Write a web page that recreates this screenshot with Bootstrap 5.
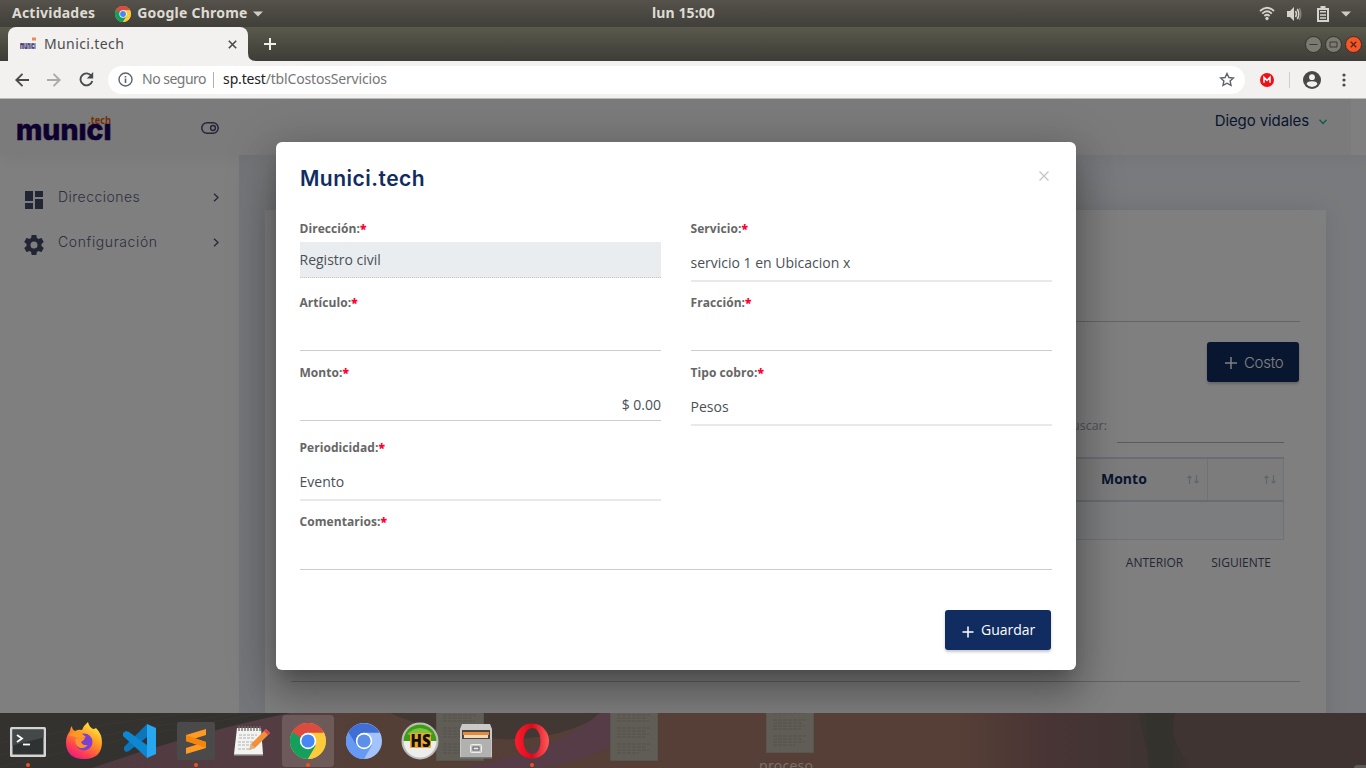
<!DOCTYPE html>
<html lang="es">
<head>
<meta charset="utf-8">
<title>Munici.tech</title>
<link href="https://cdn.jsdelivr.net/npm/bootstrap@5.3.0/dist/css/bootstrap.min.css" rel="stylesheet">
<style>
body{width:1366px;height:768px;overflow:hidden;font-family:"Open Sans","Noto Sans",sans-serif;font-size:14px;color:#495057;line-height:1.3}
svg{display:block;flex:none}
.lbl{white-space:nowrap}
.topbar{height:27px;background:linear-gradient(#55524b,#403f39);font:700 14px "Noto Sans",sans-serif;color:#dfdbd2}
.topbar .lbl,.tab-on .lbl,.tools .lbl{padding-bottom:2px}
.strip{height:34px;background:linear-gradient(#5a594c,#3d3c37)}
.tab-on{width:240px;margin-left:8px;background:#f2f1f0;border-radius:8px 8px 0 0;color:#4c4c4c;font:14px "Noto Sans",sans-serif;padding:0 11px 0 12px}
.tools{height:38px;background:#f2f1f0;border-bottom:1px solid #b9bbba;color:#767676;font:14px "Noto Sans",sans-serif}
.omni{width:1137px;height:28px;margin-left:14px;border-radius:14px;background:#fff;padding:0 10px}
.viewport{height:614px;background:#f2f5fa;overflow:hidden}
.apphead{height:56px;flex:none;background:linear-gradient(90deg,#f7f7f7 1351px,#fff 1351px);box-shadow:0 0 20px rgba(60,60,80,.09);font-family:Inter,sans-serif;color:#102c61}
.side{width:239px;background:#fff;padding:21px 20px 0 24px;font-family:Inter,sans-serif;font-weight:300;color:#5c6080;font-size:14px}
.side .item{height:45px}
.main-area{padding:55px 40px 0 26px;background:linear-gradient(90deg,#e8ecf2,#f2f5fa 25px)}
.panel{height:600px;background:#fff;padding:111px 26px 0 26px;box-shadow:0 0 24px rgba(60,75,100,.13)}
.line{border-top:1px solid #c8c8c8}
.btn-navy{background:#102c61;color:#fff;border:0;border-radius:3px;height:40px;box-shadow:0 2px 3px rgba(0,0,0,.22)}
.btn-navy:hover{background:#102c61;color:#fff}
.search-line{width:167px;height:36px;border-bottom:1px solid #b0b4b8}
.grid-tb{--bs-table-bg:transparent;width:972px;border:1px solid #dce2ec;border-top:2px solid #d4dce8;table-layout:fixed;margin:0}
.grid-tb th{height:43px;background:#f8f9fb;border-right:1px solid #dfe4ee;border-bottom:2px solid #d0d8e6;color:#102c61;padding:0 14px;vertical-align:middle;font-size:14px}
.grid-tb td{height:38px;background:#f8fafe;border:0;padding:0}
.pager{font-size:12px;color:#4b4d68;gap:28px}
.shade{position:absolute;inset:0;z-index:2;background:rgba(0,0,0,.5)}
.dialog{position:absolute;z-index:3;left:276px;top:43px;width:800px;height:528px;border:0;border-radius:6px;background:#fff;padding:20px 24px;color:#495057;box-shadow:0 11px 15px -7px rgba(0,0,0,.2),0 24px 38px 3px rgba(0,0,0,.2),0 9px 46px 8px rgba(0,0,0,.17)}
.dialog h5{font:600 21px/33px Inter,sans-serif;color:#102c61;margin:0}
.fields{--bs-gutter-x:30px;margin-top:24px}
.fld label{display:block;height:22px;line-height:18px;padding-top:1px;font-weight:700;font-size:12px;letter-spacing:.06px;color:#666;text-indent:-.5px}
.fld label b{color:#fc0030}
.fld .form-control,.fld .form-select{border:0;border-bottom:1px solid #cdcdcd;border-radius:0;background:none;padding:4px 0 0;height:36px;font-size:14px;line-height:32px;color:#495057;text-indent:-.5px}
.fld .form-select{border-bottom:2px solid #e9e9e9;height:41px;padding-top:3px;line-height:38px}
.fld .form-control.locked{background:#e9edf0;border-bottom:1px dotted #c4c8cc;margin-top:1px;padding-top:2px}
.r70{height:70px}.r74{height:74px}.r75{height:75px}
.dock{height:55px;overflow:hidden}
.wall{position:absolute;left:0;top:0}
.cell{width:56px;height:55px}
.cell.active::before{content:"";position:absolute;left:2px;top:2px;width:52px;height:52px;border-radius:4px;background:rgba(255,255,255,.15)}
.cell.run::after{content:"";position:absolute;left:26px;top:50px;width:4px;height:4px;border-radius:50%;background:#e95420}
.cell svg{position:relative}
</style>
</head>
<body class="d-flex flex-column">

<!-- system bar -->
<div class="topbar d-flex align-items-center flex-shrink-0 position-relative">
  <span class="lbl" style="margin-left:12px;letter-spacing:.22px">Actividades</span>
  <svg width="16" height="16" viewBox="0 0 36 36" style="margin-left:20px"><use href="#chrome"/></svg>
  <span class="lbl" style="margin-left:6px;letter-spacing:.22px">Google Chrome</span>
  <svg width="10" height="6" viewBox="0 0 10 6" style="margin-left:5px"><path d="M0 0.5h10L5 5.5z" fill="#d0ccc4"/></svg>
  <span class="lbl position-absolute" style="left:652px;letter-spacing:.1px">lun 15:00</span>
  <div class="d-flex align-items-center ms-auto" style="padding-right:15px">
    <svg width="16" height="15" viewBox="0 0 16 15" fill="none" stroke="#d6d3cc" stroke-width="1.800"><path d="M1 5Q8-1.500 15 5M3.200 7.600Q8 3 12.800 7.600M5.400 10Q8 7.600 10.600 10"/><circle cx="8" cy="12.500" r="1.300" fill="#d6d3cc" stroke-width="1"/></svg>
    <svg width="16" height="16" viewBox="0 0 16 16" style="margin-left:11px"><path d="M1 5h3l4-4v14l-4-4H1z" fill="#d6d3cc"/><path d="M9.500 5q2 3 0 6" stroke="#d6d3cc" stroke-width="1.500" fill="none"/><path d="M11.300 3q3 5 0 10" stroke="#d6d3cc" stroke-width="1.500" fill="none"/><path d="M13.300 2q3 6 0 12" stroke="#85827b" stroke-width="1.500" fill="none"/></svg>
    <svg width="12" height="16" viewBox="0 0 12 16" style="margin-left:15px"><path d="M3.500 0h5v2H12v14H0V2h3.500z" fill="#d6d3cc"/><path d="M2 4h8v10H2z" fill="#484640"/><path d="M3 5h6v1.500H3zM3 8.200h6v1.500H3zM3 11.300h6v1.500H3z" fill="#d6d3cc"/></svg>
    <svg width="10" height="6" viewBox="0 0 10 6" style="margin-left:12px"><path d="M0 0.500h10L5 5.500z" fill="#d0ccc4"/></svg>
  </div>
</div>

<!-- browser tabs -->
<div class="strip d-flex align-items-stretch flex-shrink-0">
  <div class="tab-on d-flex align-items-center">
    <svg width="16" height="18" viewBox="0 0 16 18"><text x="0" y="14" font-family="Inter" font-weight="800" font-size="11" fill="#2a1a66" textLength="15.500" lengthAdjust="spacingAndGlyphs">munıcı</text><rect x="12" y="2.500" width="4" height="3" fill="#f08a4b"/></svg>
    <span class="lbl" style="margin-left:8px;letter-spacing:.38px">Munici.tech</span>
    <svg class="ms-auto" width="9" height="9" viewBox="0 0 9 9" stroke="#4a4a4a" stroke-width="1.600"><path d="M.8.8l7.400 7.400M8.200.8L.8 8.200"/></svg>
  </div>
  <svg class="align-self-end" width="8" height="8" viewBox="0 0 8 8"><path d="M0 0q0 8 8 8H0z" fill="#f2f1f0"/></svg>
  <svg class="align-self-center" width="12" height="12" viewBox="0 0 12 12" style="margin-left:8px" stroke="#f0eee8" stroke-width="2"><path d="M6 0v12M0 6h12"/></svg>
  <div class="d-flex align-items-center ms-auto" style="gap:3px;padding-right:4.500px">
    <svg width="17" height="17" viewBox="0 0 17 17"><circle cx="8.500" cy="8.500" r="8" fill="#7c7b71" stroke="#33322d"/><path d="M4.500 8.500h8" stroke="#3a3934"/></svg>
    <svg width="17" height="17" viewBox="0 0 17 17"><circle cx="8.500" cy="8.500" r="8" fill="#7c7b71" stroke="#33322d"/><path d="M5 6h7v5H5z" stroke="#3a3934" fill="none"/></svg>
    <svg width="17" height="17" viewBox="0 0 17 17"><circle cx="8.500" cy="8.500" r="8" fill="#f4582a" stroke="#4b2a1d"/><path d="M5.700 5.700l5.600 5.600M11.300 5.700l-5.600 5.600" stroke="#5a2512" stroke-width="1.300"/></svg>
  </div>
</div>

<!-- address bar -->
<div class="tools d-flex align-items-center flex-shrink-0">
  <svg width="14" height="14" viewBox="0 0 14 14" style="margin-left:15px" fill="none" stroke="#4a4a4a" stroke-width="1.900"><path d="M14 7H1.500M7.500.8L1.300 7l6.200 6.200"/></svg>
  <svg width="14" height="14" viewBox="0 0 14 14" style="margin-left:18px" fill="none" stroke="#a9a9a8" stroke-width="1.900"><path d="M0 7h12.500M6.500.8L12.700 7l-6.200 6.200"/></svg>
  <svg width="15" height="15" viewBox="0 0 15 15" style="margin-left:18px" fill="none" stroke="#4a4a4a" stroke-width="1.900"><path d="M12.500 4A6 6 0 1 0 13.300 9"/><path d="M14.200 0v6.400H7.800z" fill="#4a4a4a" stroke="none"/></svg>
  <div class="omni d-flex align-items-center">
    <svg width="15" height="15" viewBox="0 0 15 15"><circle cx="7.500" cy="7.500" r="6.500" fill="none" stroke="#5f6368" stroke-width="1.400"/><path d="M6.700 6.500h1.600V11H6.700zM6.700 3.900h1.600v1.600H6.700z" fill="#5f6368"/></svg>
    <span class="lbl" style="margin-left:9px;letter-spacing:-.5px">No seguro</span>
    <span style="width:1px;height:16px;background:#b0b0b0;margin:0 9px 0 7px"></span>
    <span class="lbl" style="letter-spacing:-.17px"><span style="color:#222">sp.test</span>/tblCostosServicios</span>
    <svg class="ms-auto" width="16" height="15" viewBox="0 0 16 15" fill="none" stroke="#5f6368" stroke-width="1.400"><path d="M8 1.500l1.900 4 4.500.5-3.300 3 .9 4.400L8 11.200l-4 2.200.9-4.400-3.300-3 4.500-.5z"/></svg>
  </div>
  <svg width="14" height="14" viewBox="0 0 14 14" style="margin-left:15px"><circle cx="7" cy="7" r="7" fill="#f30d15"/><path d="M4 9.800V4.400l3 3 3-3v5.400" fill="none" stroke="#fff" stroke-width="1.500"/></svg>
  <span style="width:1px;height:16px;background:#cfcfcf;margin:0 13px 0 15px"></span>
  <svg width="18" height="18" viewBox="0 0 18 18"><circle cx="9" cy="9" r="9" fill="#474747"/><circle cx="9" cy="6.200" r="2.900" fill="#f2f1f0"/><path d="M3.600 13.200q0-3 5.400-3t5.400 3Q12.500 16 9 16t-5.400-2.800z" fill="#f2f1f0"/></svg>
  <svg width="4" height="14" viewBox="0 0 4 14" style="margin-left:21px" fill="#4a4a4a"><circle cx="2" cy="2" r="1.600"/><circle cx="2" cy="7" r="1.600"/><circle cx="2" cy="12" r="1.600"/></svg>
</div>

<!-- web page -->
<div class="viewport position-relative flex-shrink-0 d-flex flex-column">
  <header class="apphead d-flex position-relative z-1">
    <svg width="98" height="36" viewBox="0 0 98 36" style="margin:12px 0 0 16px"><text x="0" y="28.500" font-family="Inter" font-weight="800" font-size="28" fill="#1d005f" stroke="#1d005f" stroke-width=".5" textLength="95.500" lengthAdjust="spacingAndGlyphs">munıcı</text><text x="72" y="13" font-family="Open Sans" font-weight="700" font-size="10" fill="#e8590c" textLength="23" lengthAdjust="spacingAndGlyphs">.tech</text></svg>
    <svg width="18" height="12" viewBox="0 0 18 12" style="margin:23px 0 0 87px" fill="none" stroke="#4a4d70" stroke-width="1.500"><rect x=".8" y=".8" width="16.400" height="10.400" rx="5.200"/><circle cx="12" cy="6" r="2.400"/></svg>
    <span class="lbl ms-auto" style="margin-top:12px;font-size:15px;letter-spacing:-.1px">Diego vidales</span>
    <svg width="8" height="6" viewBox="0 0 8 6" style="margin:20px 39px 0 10px" fill="none" stroke="#12b5a0" stroke-width="1.300"><path d="M.5.8L4 4.500 7.500.8"/></svg>
  </header>
  <div class="d-flex flex-grow-1">
    <nav class="side flex-shrink-0">
      <div class="item d-flex">
        <svg width="20" height="18" viewBox="0 0 20 18" style="margin-top:15px" fill="#444a68"><path d="M1 0h8v10H1zM11 0h8v6h-8zM1 12h8v6H1zM11 8h8v10h-8z"/></svg>
        <span class="lbl" style="margin:12px 0 0 14px;letter-spacing:.48px">Direcciones</span>
        <svg class="ms-auto" width="6" height="9" viewBox="0 0 6 9" style="margin-top:17px" fill="none" stroke="#4a4d70" stroke-width="1.300"><path d="M1 .7l4 3.800-4 3.800"/></svg>
      </div>
      <div class="item d-flex">
        <svg width="20" height="20" viewBox="2 2 20 20" style="margin-top:14px" fill="#444a68"><path d="M19.430 12.980c.04-.32.070-.64.070-.98s-.03-.66-.07-.98l2.110-1.650c.19-.15.24-.42.120-.64l-2-3.460c-.12-.22-.39-.3-.61-.22l-2.490 1c-.52-.4-1.080-.73-1.690-.98l-.38-2.650A.488.488 0 0 0 14 2h-4c-.25 0-.46.180-.49.420l-.38 2.650c-.61.250-1.170.590-1.690.980l-2.490-1c-.23-.09-.49 0-.61.220l-2 3.460c-.13.220-.07.490.120.640l2.110 1.650c-.04.320-.07.650-.07.980s.03.660.070.980l-2.110 1.650c-.19.150-.24.420-.12.640l2 3.460c.12.220.390.300.610.220l2.490-1c.52.400 1.080.730 1.690.980l.38 2.650c.03.240.240.420.490.420h4c.25 0 .46-.18.490-.42l.38-2.650c.61-.25 1.170-.59 1.690-.98l2.490 1c.23.090.490 0 .61-.22l2-3.460c.12-.22.070-.49-.12-.64zM12 15.500a3.500 3.500 0 1 1 0-7 3.500 3.500 0 0 1 0 7z"/></svg>
        <span class="lbl" style="margin:12px 0 0 14px;letter-spacing:.6px">Configuración</span>
        <svg class="ms-auto" width="6" height="9" viewBox="0 0 6 9" style="margin-top:17px" fill="none" stroke="#4a4d70" stroke-width="1.300"><path d="M1 .7l4 3.800-4 3.800"/></svg>
      </div>
    </nav>
    <main class="main-area flex-grow-1">
      <div class="panel">
        <div class="line"></div>
        <div class="d-flex justify-content-end" style="margin-top:20px;padding-right:1px">
          <div class="btn btn-navy d-flex align-items-center p-0" style="width:92px;font:300 15px Inter,sans-serif">
            <svg width="12" height="12" viewBox="0 0 12 12" style="margin:2px 0 0 18px" stroke="#fff" stroke-width="1.500"><path d="M6 0v12M0 6h12"/></svg>
            <span class="lbl" style="margin-left:7px;letter-spacing:-.3px">Costo</span>
          </div>
        </div>
        <div class="d-flex justify-content-end" style="margin-top:25px;padding-right:16px">
          <span class="lbl" style="color:#a0a0a0;font-size:12.500px;margin:11px 10px 0 0">Buscar:</span><div class="search-line"></div>
        </div>
        <div class="d-flex justify-content-end" style="margin-top:14px;padding-right:16px">
          <table class="table grid-tb">
            <colgroup><col><col style="width:167px"><col style="width:76px"></colgroup>
            <tr><th></th>
              <th style="padding-right:8px"><div class="d-flex align-items-center"><span style="margin-left:46px">Monto</span><svg class="ms-auto" width="12" height="9" viewBox="0 0 12 9" fill="none" stroke="#c2c8d2" stroke-width="1.200"><path d="M2.500 9V1M.5 3l2-2 2 2M9.500 0v8M7.500 6l2 2 2-2"/></svg></div></th>
              <th style="padding-right:7px"><svg class="ms-auto" width="12" height="9" viewBox="0 0 12 9" fill="none" stroke="#c2c8d2" stroke-width="1.200"><path d="M2.500 9V1M.5 3l2-2 2 2M9.500 0v8M7.500 6l2 2 2-2"/></svg></th></tr>
            <tr><td colspan="3"></td></tr>
          </table>
        </div>
        <div class="pager d-flex justify-content-end" style="margin-top:15px;padding-right:29px"><span>ANTERIOR</span><span>SIGUIENTE</span></div>
        <div class="line" style="margin-top:111px"></div>
      </div>
    </main>
  </div>

  <div class="shade"></div>
  <div class="modal-content dialog">
    <div class="d-flex justify-content-between">
      <h5 class="lbl" style="letter-spacing:.5px">Munici.tech</h5>
      <svg width="10" height="10" viewBox="0 0 10 10" style="margin:9px 3.500px 0 0" stroke="#c4c4c4" stroke-width="1.300"><path d="M.5.5l9 9M9.500.5l-9 9"/></svg>
    </div>
    <div class="row fields">
      <div class="col-6 fld r74"><label>Dirección:<b>*</b></label><div class="form-control locked">Registro civil</div></div>
      <div class="col-6 fld r74"><label>Servicio:<b>*</b></label><div class="form-select">servicio 1 en Ubicacion x</div></div>
      <div class="col-6 fld r70"><label>Artículo:<b>*</b></label><div class="form-control"></div></div>
      <div class="col-6 fld r70"><label>Fracción:<b>*</b></label><div class="form-control"></div></div>
      <div class="col-6 fld r75"><label>Monto:<b>*</b></label><div class="form-control text-end">$ 0.00</div></div>
      <div class="col-6 fld r75"><label>Tipo cobro:<b>*</b></label><div class="form-select">Pesos</div></div>
      <div class="col-6 fld r74"><label>Periodicidad:<b>*</b></label><div class="form-select">Evento</div></div>
      <div class="col-6 r74"></div>
      <div class="col-12 fld"><label>Comentarios:<b>*</b></label><div class="form-control"></div></div>
    </div>
    <div class="d-flex justify-content-end" style="margin-top:40px;padding-right:1px">
      <button type="button" class="btn btn-navy d-flex align-items-center p-0" style="width:106px;font-size:14px">
        <svg width="12" height="12" viewBox="0 0 12 12" style="margin:3px 0 0 17px" stroke="#fff" stroke-width="1.500"><path d="M6 0.500v11M0.500 6h11"/></svg>
        <span class="lbl" style="margin-left:7px;padding-bottom:2px">Guardar</span>
      </button>
    </div>
  </div>
</div>

<!-- dock -->
<div class="dock position-relative flex-shrink-0 d-flex">
  <svg class="wall" width="1366" height="55" viewBox="0 0 1366 55">
    <defs>
      <linearGradient id="wg" x1="0" x2="1"><stop offset="0" stop-color="#4e3a41"/><stop offset=".2" stop-color="#543d42"/><stop offset=".26" stop-color="#543f37"/><stop offset=".7" stop-color="#563f36"/><stop offset=".77" stop-color="#483435"/><stop offset=".83" stop-color="#403432"/><stop offset="1" stop-color="#403432"/></linearGradient>
      <linearGradient id="dk" x1="0" x2="1"><stop offset="0" stop-color="#33322c" stop-opacity=".4"/><stop offset=".25" stop-color="#33322c"/><stop offset=".55" stop-color="#33322c"/><stop offset="1" stop-color="#33322c" stop-opacity="0"/></linearGradient>
    </defs>
    <rect width="1366" height="55" fill="url(#wg)"/>
    <path d="M0 0h290Q200 18 92 55H0z" fill="#34322e"/>
    <path d="M0 30Q120 8 190 0M0 42Q130 16 240 0M0 54Q130 22 265 0" stroke="#3a3732" fill="none"/>
    <path d="M390 0h215Q560 28 500 26 440 22 390 0z" fill="#413733"/>
    <path d="M600 0h12v34Q575 50 540 55h-75Q560 35 600 0z" fill="#553c47"/>
    <path d="M1137 0h38q-8 30 20 55h-46q-2-25-12-55z" fill="url(#dk)"/>
    <g id="doc"><rect x="436.500" y="-5" width="47" height="52.500" fill="#605d57" stroke="#575750"/><path d="M443 2h33M443 5h30M443 8h32M443 15h33M443 18h30M443 21h32M443 24h28M443 31h33M443 34h30M443 37h32M443 40h22" stroke="#54534d" stroke-dasharray="4 1"/></g>
    <use href="#doc" x="174"/><use href="#doc" x="330" y="-8"/>
    <text x="759" y="58" font-family="Noto Sans" font-size="14" fill="#77716a" textLength="54">proceso</text>
    <path d="M1354 55q0-3 4-3h8v3z" fill="#5c5a56"/>
  </svg>
  <div class="cell run d-flex justify-content-center align-items-center position-relative"><svg width="36" height="36" viewBox="0 0 36 36"><rect x="0" y="4" width="36" height="30" rx="1.500" fill="#d4d4d4"/><rect x="2.500" y="6.500" width="31" height="25" fill="#2f3232"/><path d="M2.500 6.500h31v8l-31 8z" fill="#454849"/><path d="M7 12l5 3.500L7 19" fill="none" stroke="#fff" stroke-width="1.800"/><path d="M13 21.500h7" stroke="#fff" stroke-width="1.800"/></svg></div>
  <div class="cell d-flex justify-content-center align-items-center position-relative"><svg width="36" height="38" viewBox="0 0 36 38"><defs><linearGradient id="ff" x1=".8" y1="0" x2=".2" y2="1"><stop offset="0" stop-color="#fff44f"/><stop offset=".4" stop-color="#ff9a1f"/><stop offset=".75" stop-color="#ff4050"/><stop offset="1" stop-color="#e9168c"/></linearGradient></defs><path d="M6 4q0 4 3 5 4-2 7-1 2-5 6-8 1 5 5 7 2 0 3-1 6 6 6 14 0 17-18 17T0 20q0-6 4-11 0-3 2-5z" fill="url(#ff)"/><circle cx="18" cy="20" r="8.500" fill="#7d3fd0"/><path d="M10 16q7 1 9-1 0 3-4 5 2 4 7 3-5 6-11 1-3-4-1-8z" fill="#ff9230"/><path d="M3 14q5-6 12-3l5 4-7 2q-6-4-10-3z" fill="#ff9a24"/></svg></div>
  <div class="cell d-flex justify-content-center align-items-center position-relative"><svg width="36" height="36" viewBox="0 0 36 36"><path d="M25 1L2 24v3l2 2 3-1L29 11z" fill="#0b76bc"/><path d="M25 35L1 13v-3l3-2 3 1 22 16z" fill="#0e86d0"/><path d="M25 1l9 4v26l-9 4z" fill="#27a7f2"/></svg></div>
  <div class="cell run d-flex justify-content-center align-items-center position-relative"><svg width="38" height="38" viewBox="0 0 38 38"><rect width="38" height="38" rx="2" fill="#4a4a4a"/><path d="M9 13l20-6v6l-11 3.500L29 20v6L9 32v-6l11-3.500L9 19z" fill="#ff9a22"/><path d="M9 13v6l20 7v-6z" fill="#f5850f"/></svg></div>
  <div class="cell d-flex justify-content-center align-items-center position-relative"><svg width="36" height="36" viewBox="0 0 36 36"><path d="M3 5h24l2 26H0z" fill="#f3f3f1"/><path d="M0 31h29v1.500H0z" fill="#aaa"/><path d="M5 12h18M5 15h15M4 19h17M4 22h14M4 26h13" stroke="#b0b0ae" stroke-dasharray="3 1"/><path d="M5 3v5M8 3v5M11 3v5M14 3v5M17 3v5M20 3v5M23 3v5M26 3v5" stroke="#6a6a6a" stroke-width="1.300"/><path d="M32 6l4 4-15 15-6 2 2-6z" fill="#f0913a"/><path d="M32 6l4 4-2 2-4-4z" fill="#d45"/><path d="M15 27l2-6 4 4z" fill="#d9b58a"/></svg></div>
  <div class="cell active run d-flex justify-content-center align-items-center position-relative"><svg width="36" height="36" viewBox="0 0 36 36"><g id="chrome"><circle cx="18" cy="18" r="18" fill="#fbcb3b"/><path d="M18 18L2.400 9A18 18 0 0 0 18 36l8-13z" fill="#159f5c"/><path d="M2.400 9A18 18 0 0 1 33.600 9H18v9z" fill="#dd4b3e"/><path d="M2.400 9l8 13.500L18 18z" fill="#159f5c"/><path d="M2.400 9A18 18 0 0 1 33.600 9.800H18L11 15z" fill="#dd4b3e"/><path d="M34 10A18 18 0 0 1 18 36l8-14V10z" fill="#fbcb3b"/><circle cx="18" cy="18" r="8.200" fill="#fff"/><circle cx="18" cy="18" r="6.600" fill="#4487f5"/></g></svg></div>
  <div class="cell d-flex justify-content-center align-items-center position-relative"><svg width="36" height="36" viewBox="0 0 36 36"><circle cx="18" cy="18" r="18" fill="#a2c3fb"/><path d="M2.400 9A18 18 0 0 0 18 36l8-14-8-4z" fill="#6599f3"/><path d="M2.400 9A18 18 0 0 1 33.600 9.800H18L10.500 22z" fill="#3f6fd4"/><circle cx="18" cy="18" r="8.200" fill="#fff"/><circle cx="18" cy="18" r="6.600" fill="#5c8fe8"/></svg></div>
  <div class="cell d-flex justify-content-center align-items-center position-relative"><svg width="38" height="38" viewBox="0 0 38 38"><circle cx="19" cy="19" r="17.500" fill="#ededeb" stroke="#bcbcb8" stroke-width="2"/><path d="M2.500 19a16.500 16.500 0 0 1 33 0z" fill="#3f9a14"/><path d="M6 12q13-12 26 0-13 5-26 0z" fill="#76c442"/><rect x="9" y="11" width="21" height="15" rx="1" fill="#f0a828"/><text x="9.500" y="24.800" font-family="Open Sans" font-weight="800" font-size="17" fill="#111" textLength="20" lengthAdjust="spacingAndGlyphs">HS</text></svg></div>
  <div class="cell d-flex justify-content-center align-items-center position-relative"><svg width="34" height="36" viewBox="0 0 34 36"><path d="M3 1h28l2 5v28H1V6z" fill="#c9c9c7"/><rect x="3" y="7" width="28" height="9" fill="#4d4640"/><path d="M4 9h26v3H4z" fill="#e48a3c"/><path d="M5 12h24v3H5z" fill="#f0d9ba"/><path d="M2 16h30v18H2z" fill="#b1b1b0"/><path d="M1 34h32v1.500H1z" fill="#777"/><rect x="11.500" y="21.500" width="11" height="8" rx="1" fill="#c8c8c8" stroke="#eee"/><rect x="14" y="24" width="6" height="3" fill="#eee" stroke="#555"/></svg></div>
  <div class="cell run d-flex justify-content-center align-items-center position-relative"><svg width="36" height="36" viewBox="0 0 36 36"><defs><linearGradient id="op" x1="0" x2="1"><stop offset="0" stop-color="#ff1b2d"/><stop offset=".5" stop-color="#d80c1c"/><stop offset="1" stop-color="#ff5a5a"/></linearGradient></defs><path fill-rule="evenodd" d="M18 .5a17 17.500 0 1 0 .01 0zM18.500 5c5 0 8 6 8 13s-3 13-8 13-9-6-9-13 4-13 9-13z" fill="url(#op)"/></svg></div>
  <svg class="ms-auto align-self-center" width="24" height="24" viewBox="0 0 24 24" style="margin-right:16px" fill="#f3efec"><circle cx="2.500" cy="2.500" r="2.400"/><circle cx="12" cy="2.500" r="2.400"/><circle cx="21.500" cy="2.500" r="2.400"/><circle cx="2.500" cy="12" r="2.400"/><circle cx="12" cy="12" r="2.400"/><circle cx="21.500" cy="12" r="2.400"/><circle cx="2.500" cy="21.500" r="2.400"/><circle cx="12" cy="21.500" r="2.400"/><circle cx="21.500" cy="21.500" r="2.400"/></svg>
</div>
<script src="https://cdn.jsdelivr.net/npm/bootstrap@5.3.0/dist/js/bootstrap.bundle.min.js"></script>
</body>
</html>
